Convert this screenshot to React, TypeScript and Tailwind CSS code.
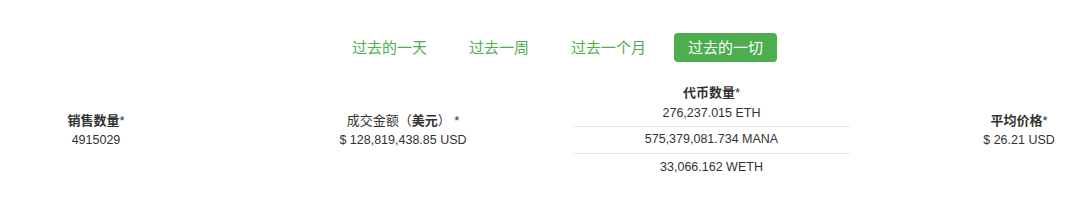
const tabs = ["过去的一天", "过去一周", "过去一个月", "过去的一切"];

const font = { fontFamily: '"Liberation Sans", "Noto Sans CJK SC", sans-serif' };

function Stat({ label, value }: { label: string; value: string }) {
  return (
    <div className="flex flex-col items-center text-[#333]">
      <div className="text-[13px] leading-[16px] font-bold">
        {label}
        <span className="font-normal">*</span>
      </div>
      <div className="text-[12.5px] leading-[16px] mt-[3px]">{value}</div>
    </div>
  );
}

export default function App() {
  const active = 3;
  return (
    <div className="w-[1080px] h-[213px] bg-white overflow-hidden" style={font}>
      {/* Period tabs */}
      <div className="flex justify-center pl-[35px] pt-[33px] gap-[14px]">
        {tabs.map((t, i) => (
          <button
            key={t}
            className={
              i === active
                ? "px-[14px] h-[29px] text-[15px] leading-[19px] rounded-[4px] bg-[#4cae4f] text-white"
                : "px-[14px] h-[29px] text-[15px] leading-[19px] rounded-[4px] text-[#4cae4f]"
            }
          >
            {t}
          </button>
        ))}
      </div>

      {/* Stats */}
      <div className="flex items-start mt-[23px]">
        <div className="w-[192px] mt-[28px] flex justify-center">
          <Stat label="销售数量" value="4915029" />
        </div>
        <div className="w-[230px] ml-[96px] mt-[28px] flex justify-center">
          <div className="flex flex-col items-center text-[#333]">
            <div className="text-[13px] leading-[16px]">
              成交金额（<span className="font-bold">美元</span>） *
            </div>
            <div className="text-[12.5px] leading-[16px] mt-[3px]">$ 128,819,438.85 USD</div>
          </div>
        </div>
        <div className="w-[277px] ml-[55px] flex flex-col text-[#333]">
          <div className="text-[13px] leading-[16px] font-bold text-center">
            代币数量<span className="font-normal">*</span>
          </div>
          <div className="text-[12.5px] leading-[16px] text-center pt-[4px] pb-[5px] border-b border-[#e8e8e8]">
            276,237.015 ETH
          </div>
          <div className="text-[12.5px] leading-[16px] text-center pt-[4px] pb-[6px] border-b border-[#e8e8e8]">
            575,379,081.734 MANA
          </div>
          <div className="text-[12.5px] leading-[16px] text-center pt-[5px] pb-[5px]">
            33,066.162 WETH
          </div>
        </div>
        <div className="w-[122px] ml-[108px] mt-[28px] flex justify-center">
          <Stat label="平均价格" value="$ 26.21 USD" />
        </div>
      </div>
    </div>
  );
}
